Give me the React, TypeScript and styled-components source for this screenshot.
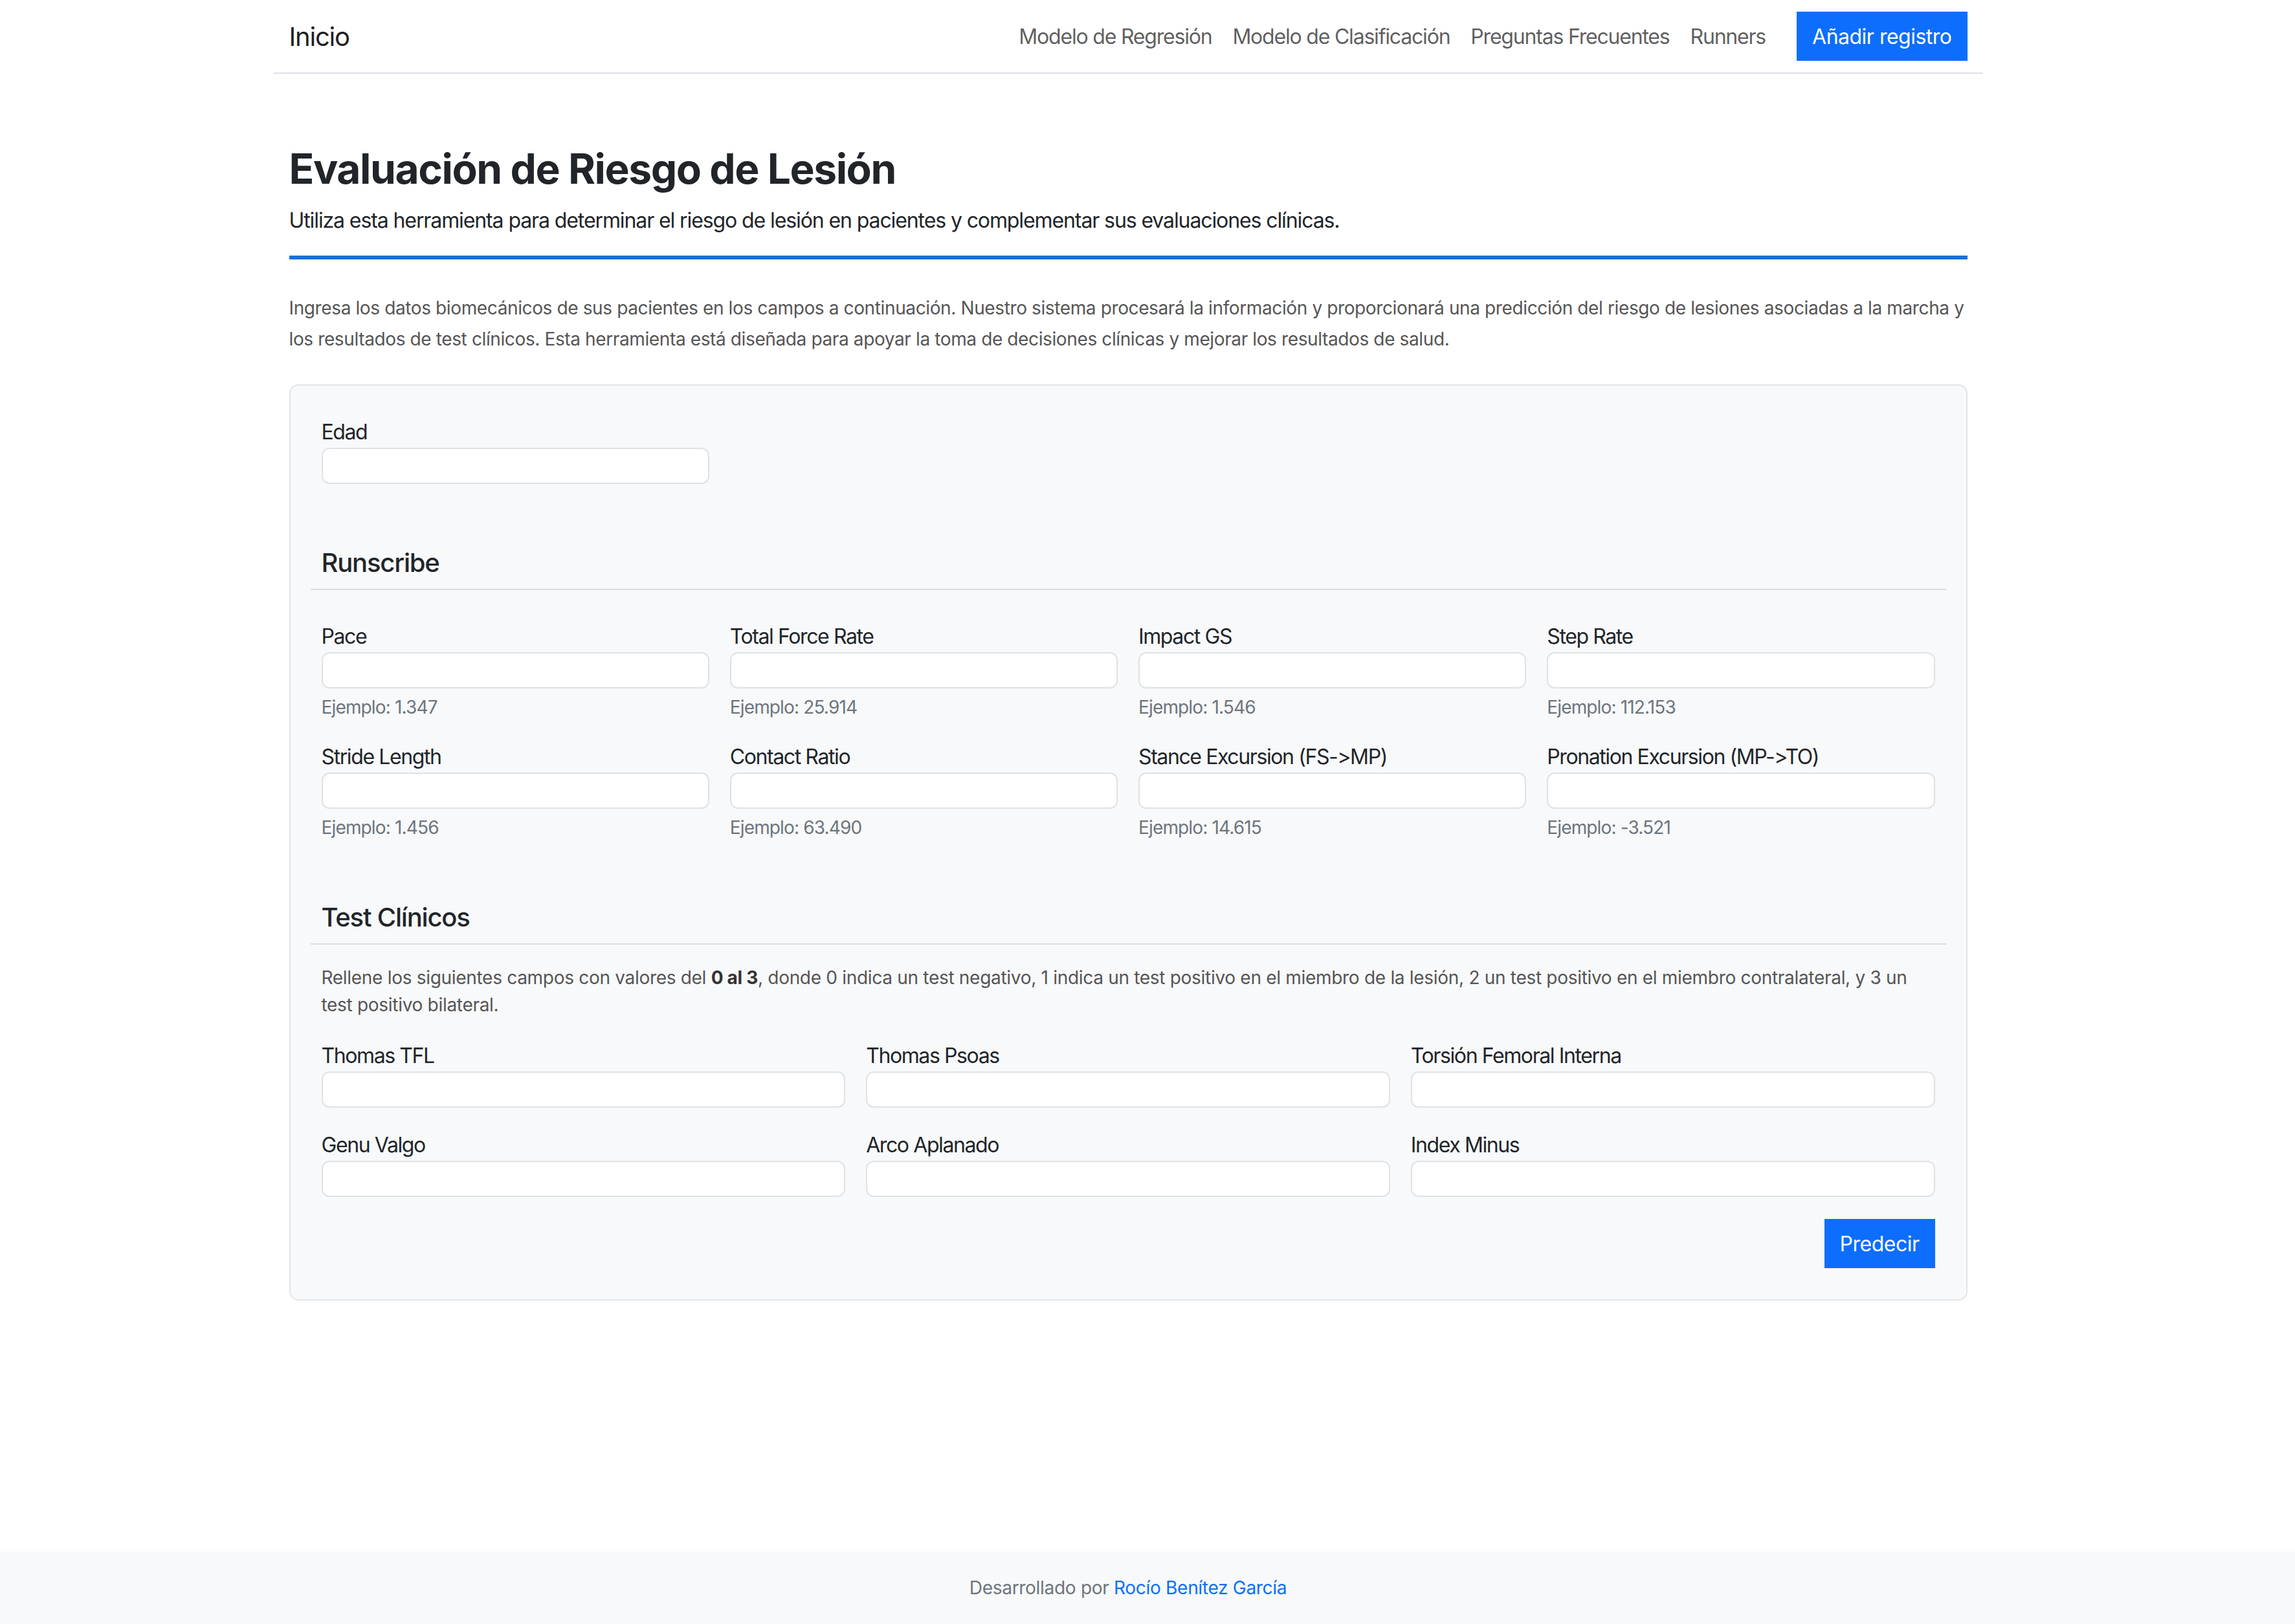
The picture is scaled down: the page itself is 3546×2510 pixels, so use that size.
import React from "react";
import styled, { createGlobalStyle } from "styled-components";

const GlobalStyle = createGlobalStyle`
  *, *::before, *::after { box-sizing: border-box; }
  html, body { margin: 0; padding: 0; background: #fff; }
  body {
    font-family: Inter, "Helvetica Neue", Arial, sans-serif;
    color: #212529;
    -webkit-font-smoothing: antialiased;
  }
`;

const Page = styled.div`
  min-height: 100vh;
  display: flex;
  flex-direction: column;
`;

const Frame = styled.div`
  padding-right: 60px;
`;

const NavBar = styled.nav`
  width: 2641px;
  margin: 0 auto;
  padding: 0 24px;
  height: 114px;
  border-bottom: 2px solid #dee2e6;
  display: flex;
  align-items: center;
  justify-content: space-between;
`;

const Brand = styled.a`
  font-size: 40px;
  line-height: 60px;
  color: rgba(0, 0, 0, 0.9);
  text-decoration: none;
  letter-spacing: -1.2px;
  margin-top: 2px;
`;

const NavList = styled.div`
  display: flex;
  align-items: center;
`;

const NavLink = styled.a`
  padding: 0 16px;
  font-size: 32px;
  line-height: 48px;
  color: rgba(0, 0, 0, 0.65);
  text-decoration: none;
  letter-spacing: -1.2px;
  margin-top: 2px;
`;

const Button = styled.button<{ $offset?: number }>`
  margin-left: ${(p) => p.$offset ?? 0}px;
  height: 76px;
  padding: 0 24px;
  border: none;
  border-radius: 0;
  background: #0d6efd;
  color: #fff;
  font-family: inherit;
  font-size: 32px;
  letter-spacing: -0.5px;
  display: inline-flex;
  align-items: center;
  cursor: pointer;
`;

const Main = styled.main`
  width: 2641px;
  margin: 0 auto;
  padding: 108px 24px 0;
`;

const Title = styled.h1`
  margin: 0 0 18px;
  font-size: 64px;
  font-weight: 700;
  line-height: 77px;
  letter-spacing: -1.4px;
  color: #212529;
`;

const Lead = styled.p`
  margin: 0 0 30px;
  font-size: 32px;
  line-height: 48px;
  letter-spacing: -1.1px;
`;

const AccentRule = styled.div`
  height: 6px;
  background: #1672d6;
  margin-bottom: 52px;
`;

const Intro = styled.p`
  margin: 0 0 46px;
  font-size: 28px;
  line-height: 47.5px;
  color: #555;
  letter-spacing: -0.38px;
`;

const Card = styled.form`
  background: #f8f9fa;
  border: 2px solid #e3e5e8;
  border-radius: 14px;
  padding: 48px;
`;

const Grid = styled.div<{ $cols: number; $top?: number; $rowGap?: number }>`
  display: grid;
  grid-template-columns: repeat(${(p) => p.$cols}, 1fr);
  column-gap: 32px;
  row-gap: ${(p) => p.$rowGap ?? 32}px;
  margin-top: ${(p) => p.$top ?? 0}px;
`;

const Field = styled.div`
  display: flex;
  flex-direction: column;
`;

const Label = styled.label`
  font-size: 32px;
  line-height: 48px;
  color: #212529;
  letter-spacing: -1.4px;
`;

const Input = styled.input`
  height: 56px;
  width: 100%;
  border: 2px solid #dee2e6;
  border-radius: 12px;
  background: #fff;
  font-family: inherit;
  font-size: 32px;
  padding: 0 24px;
`;

const Hint = styled.div`
  margin-top: 8px;
  font-size: 28px;
  line-height: 42px;
  color: #6c757d;
  letter-spacing: -0.85px;
`;

const SectionTitle = styled.h5<{ $top: number }>`
  margin: ${(p) => p.$top}px 0 16px;
  font-size: 40px;
  font-weight: 500;
  line-height: 48px;
  letter-spacing: -1.2px;
  color: #212529;
`;

const Divider = styled.hr`
  border: none;
  height: 2px;
  background: #dcdee1;
  margin: 0 -17px;
`;

const Note = styled.p`
  margin: 30px 0 0;
  font-size: 28px;
  line-height: 42px;
  color: #555;
  letter-spacing: -0.3px;

  strong {
    font-weight: 700;
    color: #333;
  }
`;

const Actions = styled.div`
  display: flex;
  justify-content: flex-end;
  margin-top: 34px;
`;

const Footer = styled.footer`
  margin-top: auto;
  height: 112px;
  background: #f8f9fa;
  display: flex;
  align-items: center;
  justify-content: center;
  padding-right: 60px;
  font-size: 28px;
  line-height: 42px;
  color: #6c757d;
  letter-spacing: -0.3px;

  a {
    color: #0d6efd;
    text-decoration: none;
  }
`;

const runscribe = [
  { label: "Pace", hint: "Ejemplo: 1.347" },
  { label: "Total Force Rate", hint: "Ejemplo: 25.914" },
  { label: "Impact GS", hint: "Ejemplo: 1.546" },
  { label: "Step Rate", hint: "Ejemplo: 112.153" },
  { label: "Stride Length", hint: "Ejemplo: 1.456" },
  { label: "Contact Ratio", hint: "Ejemplo: 63.490" },
  { label: "Stance Excursion (FS->MP)", hint: "Ejemplo: 14.615" },
  { label: "Pronation Excursion (MP->TO)", hint: "Ejemplo: -3.521" },
];

const clinical = [
  "Thomas TFL",
  "Thomas Psoas",
  "Torsión Femoral Interna",
  "Genu Valgo",
  "Arco Aplanado",
  "Index Minus",
];

export default function App() {
  return (
    <Page>
      <GlobalStyle />
      <Frame>
        <NavBar>
          <Brand href="#">Inicio</Brand>
          <NavList>
            <NavLink href="#">Modelo de Regresión</NavLink>
            <NavLink href="#">Modelo de Clasificación</NavLink>
            <NavLink href="#">Preguntas Frecuentes</NavLink>
            <NavLink href="#">Runners</NavLink>
            <Button type="button" $offset={32}>
              Añadir registro
            </Button>
          </NavList>
        </NavBar>

        <Main>
          <Title>Evaluación de Riesgo de Lesión</Title>
          <Lead>
            Utiliza esta herramienta para determinar el riesgo de lesión en pacientes y
            complementar sus evaluaciones clínicas.
          </Lead>
          <AccentRule />
          <Intro>
            Ingresa los datos biomecánicos de sus pacientes en los campos a continuación.
            Nuestro sistema procesará la información y proporcionará una predicción del riesgo
            de lesiones asociadas a la marcha y los resultados de test clínicos. Esta
            herramienta está diseñada para apoyar la toma de decisiones clínicas y mejorar los
            resultados de salud.
          </Intro>

          <Card onSubmit={(e) => e.preventDefault()}>
            <Grid $cols={4}>
              <Field>
                <Label>Edad</Label>
                <Input type="text" />
              </Field>
            </Grid>

            <SectionTitle $top={98}>Runscribe</SectionTitle>
            <Divider />
            <Grid $cols={4} $top={48}>
              {runscribe.map((f) => (
                <Field key={f.label}>
                  <Label>{f.label}</Label>
                  <Input type="text" />
                  <Hint>{f.hint}</Hint>
                </Field>
              ))}
            </Grid>

            <SectionTitle $top={94}>Test Clínicos</SectionTitle>
            <Divider />
            <Note>
              Rellene los siguientes campos con valores del <strong>0 al 3</strong>, donde 0
              indica un test negativo, 1 indica un test positivo en el miembro de la lesión, 2
              un test positivo en el miembro contralateral, y 3 un test positivo bilateral.
            </Note>
            <Grid $cols={3} $top={34} $rowGap={34}>
              {clinical.map((l) => (
                <Field key={l}>
                  <Label>{l}</Label>
                  <Input type="text" />
                </Field>
              ))}
            </Grid>

            <Actions>
              <Button type="submit">Predecir</Button>
            </Actions>
          </Card>
        </Main>
      </Frame>

      <Footer>
        <span>
          Desarrollado por <a href="#">Rocío Benítez García</a>
        </span>
      </Footer>
    </Page>
  );
}
